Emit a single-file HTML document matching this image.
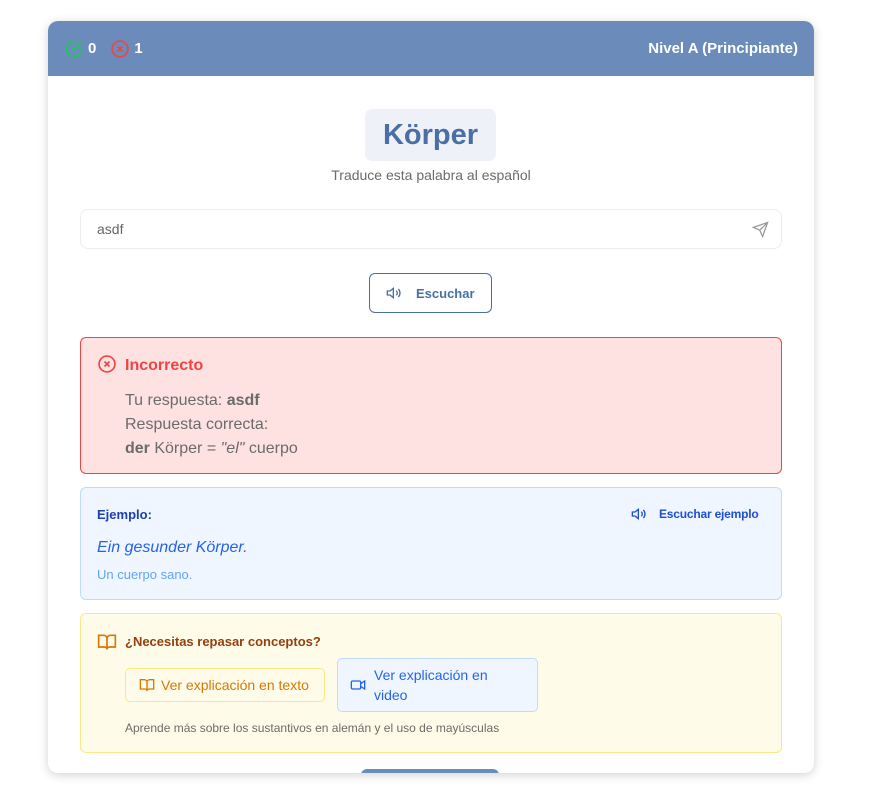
<!DOCTYPE html>
<html><head><meta charset="utf-8"><style>
*{box-sizing:border-box;margin:0;padding:0}
body{width:879px;height:799px;background:#fff;font-family:"Liberation Sans",sans-serif;position:relative;overflow:hidden}
.card{position:absolute;left:48px;top:21px;width:766px;height:752px;border-radius:10px;overflow:hidden;box-shadow:0 2px 10px rgba(0,0,0,.18);background:#fff}
.hdr{height:55px;background:#6b8cba;color:#fff;display:flex;align-items:center;justify-content:space-between;padding:0 16px;font-weight:bold;font-size:15px}
.hdr .l{display:flex;align-items:center;gap:4px}
.abs{position:absolute}
.word{left:317px;top:88px;width:131px;height:52px;background:#eef2f8;border-radius:7px;color:#4a6fa5;font-size:29px;font-weight:bold;text-align:center;line-height:52px}
.sub{left:0;width:766px;top:146px;text-align:center;color:#6b6b6b;font-size:14px}
.inp{left:32px;top:188px;width:702px;height:40px;border:1px solid #eceef0;border-radius:8px;color:#666;font-size:14px;padding:11px 16px}
.btn{left:321px;top:252px;width:123px;height:40px;border:1px solid #4a6fa5;border-radius:6px;color:#4a6fa5;font-weight:bold;font-size:13px;display:flex;align-items:center;padding-left:16px;gap:14px}
.err{left:32px;top:316px;width:702px;height:137px;background:#fee2e2;border:1px solid #ef4444;border-radius:6px}
.ex{left:32px;top:466px;width:702px;height:113px;background:#eff6ff;border:1px solid #bfdbfe;border-radius:6px}
.rv{left:32px;top:592px;width:702px;height:140px;background:#fefce8;border:1px solid #fde68a;border-radius:6px}
</style></head><body>
<div class="card">
<div class="hdr"><div class="l">
<svg width="20" height="20" viewBox="0 0 24 24" fill="none" stroke="#22c55e" stroke-width="2"><path d="M21 11v1a9 9 0 1 1-5.3-8.2"/><path d="M21 4 12 13l-3-3"/></svg><span>0</span>
<svg width="20" height="20" viewBox="0 0 24 24" fill="none" stroke="#ef4444" stroke-width="2" style="margin-left:10px"><circle cx="12" cy="12" r="9.5"/><path d="M9 9l6 6M15 9l-6 6"/></svg><span>1</span></div>
<div>Nivel A (Principiante)</div></div>
<div class="abs word">Körper</div>
<div class="abs sub">Traduce esta palabra al español</div>
<div class="abs inp">asdf<svg class="abs" style="right:12px;top:11px" width="17" height="17" viewBox="0 0 24 24" fill="none" stroke="#999" stroke-width="1.8"><path d="M22 2 11 13M22 2l-7 20-4-9-9-4z"/></svg></div>
<div class="abs btn"><svg width="16" height="16" viewBox="0 0 24 24" fill="none" stroke="#4a6fa5" stroke-width="2"><path d="M11 5 6 9H2v6h4l5 4z"/><path d="M15.5 8.5a5 5 0 0 1 0 7M18.5 6a8.5 8.5 0 0 1 0 12"/></svg>Escuchar</div>
<div class="abs err">
<svg class="abs" style="left:16px;top:16px" width="20" height="20" viewBox="0 0 24 24" fill="none" stroke="#ef4444" stroke-width="2"><circle cx="12" cy="12" r="9.5"/><path d="M9 9l6 6M15 9l-6 6"/></svg>
<div class="abs" style="left:44px;top:19px;color:#ef4444;font-weight:bold;font-size:16px">Incorrecto</div>
<div class="abs" style="left:44px;top:51px;color:#6b6b6b;font-size:16px;line-height:24px">Tu respuesta: <b>asdf</b><br>Respuesta correcta:<br><b>der</b> Körper = <i>"el"</i> cuerpo</div>
</div>
<div class="abs ex">
<div class="abs" style="left:16px;top:19px;color:#1e40af;font-weight:bold;font-size:13px">Ejemplo:</div>
<div class="abs" style="left:550px;top:18px;color:#1d4ed8;font-weight:bold;font-size:12px;display:flex;align-items:center;gap:12px;letter-spacing:-.2px"><svg width="16" height="16" viewBox="0 0 24 24" fill="none" stroke="#1d4ed8" stroke-width="2"><path d="M11 5 6 9H2v6h4l5 4z"/><path d="M15.5 8.5a5 5 0 0 1 0 7M18.5 6a8.5 8.5 0 0 1 0 12"/></svg>Escuchar ejemplo</div>
<div class="abs" style="left:16px;top:51px;color:#2563eb;font-style:italic;font-size:16px">Ein gesunder Körper.</div>
<div class="abs" style="left:16px;top:79px;color:#60a5fa;font-size:13px">Un cuerpo sano.</div>
</div>
<div class="abs rv">
<svg class="abs" style="left:16px;top:18px" width="20" height="20" viewBox="0 0 24 24" fill="none" stroke="#d97706" stroke-width="2"><path d="M2 4h6a4 4 0 0 1 4 4v13a3 3 0 0 0-3-3H2zM22 4h-6a4 4 0 0 0-4 4v13a3 3 0 0 1 3-3h7z"/></svg>
<div class="abs" style="left:44px;top:20px;color:#92400e;font-weight:bold;font-size:13px">¿Necesitas repasar conceptos?</div>
<div class="abs" style="left:44px;top:54px;width:200px;height:34px;border:1px solid #fde68a;border-radius:5px;color:#d97706;font-size:14px;display:flex;align-items:center;padding-left:13px;gap:6px"><svg width="16" height="16" viewBox="0 0 24 24" fill="none" stroke="#d97706" stroke-width="2"><path d="M2 4h6a4 4 0 0 1 4 4v13a3 3 0 0 0-3-3H2zM22 4h-6a4 4 0 0 0-4 4v13a3 3 0 0 1 3-3h7z"/></svg>Ver explicación en texto</div>
<div class="abs" style="left:256px;top:44px;width:201px;height:54px;background:#eff6ff;border:1px solid #bfdbfe;border-radius:5px;color:#2563eb;font-size:14px;display:flex;align-items:center;padding-left:12px;gap:8px;line-height:20px"><svg width="16" height="16" viewBox="0 0 24 24" fill="none" stroke="#2563eb" stroke-width="2"><rect x="2" y="6" width="14" height="12" rx="2"/><path d="m16 10 6-4v12l-6-4"/></svg><span>Ver explicación en<br>video</span></div>
<div class="abs" style="left:44px;top:107px;color:#6b6b6b;font-size:12px">Aprende más sobre los sustantivos en alemán y el uso de mayúsculas</div>
</div>
<div class="abs" style="left:313px;top:748px;width:138px;height:20px;background:#6b8cba;border-radius:6px"></div>
</div>
</body></html>
